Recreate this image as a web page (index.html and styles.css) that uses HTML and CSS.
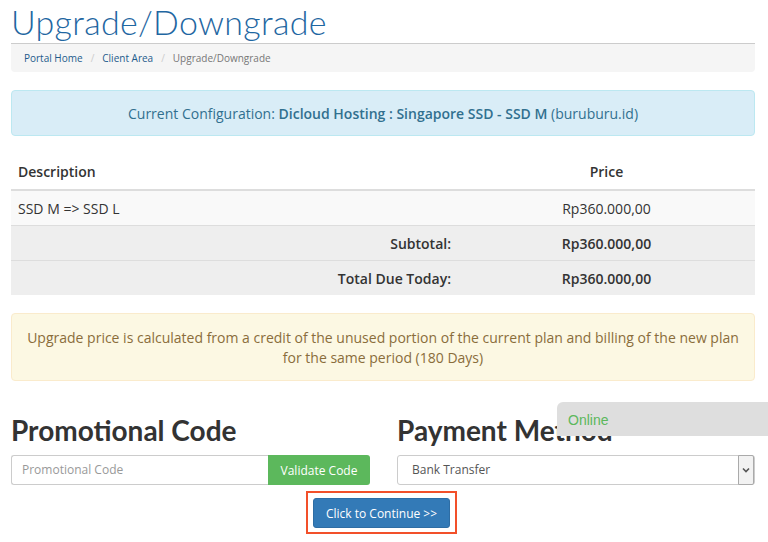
FILE: index.html
```html
<!DOCTYPE html>
<html>
<head>
<meta charset="utf-8">
<link rel="stylesheet" href="styles.css">
</head>
<body>
<div class="page">
  <h1 class="title">Upgrade/Downgrade</h1>
  <ol class="crumbs">
    <li><a href="#">Portal Home</a></li>
    <li class="sep">/</li>
    <li><a href="#">Client Area</a></li>
    <li class="sep">/</li>
    <li class="active">Upgrade/Downgrade</li>
  </ol>

  <div class="alert info">Current Configuration: <strong>Dicloud Hosting : Singapore SSD - SSD M</strong> (buruburu.id)</div>

  <table class="cart">
    <thead>
      <tr><th class="desc">Description</th><th class="price">Price</th></tr>
    </thead>
    <tbody>
      <tr class="odd"><td class="desc">SSD M =&gt; SSD L</td><td class="price">Rp360.000,00</td></tr>
      <tr class="sum"><td class="desc right">Subtotal:</td><td class="price">Rp360.000,00</td></tr>
      <tr class="sum"><td class="desc right">Total Due Today:</td><td class="price">Rp360.000,00</td></tr>
    </tbody>
  </table>

  <div class="alert warn">Upgrade price is calculated from a credit of the unused portion of the current plan and billing of the new plan for the same period (180 Days)</div>

  <div class="cols">
    <div class="col">
      <h2 class="sub">Promotional Code</h2>
      <div class="group">
        <div class="input placeholder">Promotional Code</div>
        <button class="btn green">Validate Code</button>
      </div>
    </div>
    <div class="col">
      <h2 class="sub">Payment Method</h2>
      <div class="select">
        <span class="sel-text">Bank Transfer</span>
        <span class="sel-arrow"><svg width="8" height="6" viewBox="0 0 8 6"><path d="M1 1.5 L4 4.5 L7 1.5" fill="none" stroke="#555" stroke-width="1.6"/></svg></span>
      </div>
    </div>
  </div>

  <div class="continue-row">
    <div class="highlight"><button class="btn blue">Click to Continue &gt;&gt;</button></div>
  </div>
</div>
<div class="online">Online</div>
</body>
</html>
```
FILE: styles.css
```css
html, body { margin: 0; padding: 0; background: #fff; }
body { font-family: "Open Sans", "Liberation Sans", sans-serif; color: #333; font-size: 14px; overflow: hidden; height: 542px; }
.page { width: 744px; margin-left: 11px; }
.title { font-family: "Lato", "Open Sans", sans-serif; font-weight: 300; font-size: 34px; color: #1f67a2; margin: 0; padding-top: 2px; line-height: 39px; height: 41px; border-bottom: 1px solid #ccc; letter-spacing: 0.3px; }
.crumbs { list-style: none; margin: 0 0 18px; padding: 0 13px; height: 28px; background: #f5f5f5; border-radius: 0 0 4px 4px; display: flex; align-items: center; font-size: 10px; }
.crumbs a { color: #1e5b8c; text-decoration: none; }
.crumbs .sep { color: #ccc; padding: 0 8px; }
.crumbs .active { color: #777; }
.alert { border: 1px solid; border-radius: 4px; text-align: center; }
.info { background: #d9edf7; border-color: #bce8f1; color: #31708f; font-size: 14px; height: 44px; line-height: 46px; }
.info strong { font-weight: 600; }
.cart { width: 100%; border-collapse: collapse; margin-top: 18px; font-size: 14px; }
.cart th { font-weight: 600; height: 35px; border-bottom: 2px solid #ddd; padding: 0 7px; vertical-align: middle; }
.cart th.desc { text-align: left; }
.cart td { height: 34px; border-top: 1px solid #ddd; padding: 0 7px; vertical-align: middle; }
.cart .desc { width: 433px; }
.cart .price { text-align: center; }
.cart .right { text-align: right; }
.cart tr.odd td { background: #f9f9f9; }
.cart tr.sum td { background: #eee; font-weight: 600; }
.warn { margin-top: 18px; background: #fcf8e3; border-color: #faebcc; color: #8a6d3b; font-size: 14px; line-height: 20px; padding: 14px 14px 12px; }
.cols { display: grid; grid-template-columns: 359px 358px; column-gap: 27px; margin-top: 33px; }
.sub { font-family: "Lato", "Open Sans", sans-serif; font-weight: 700; font-size: 28px; color: #333; margin: 0 0 9px; line-height: 32px; }
.group { display: flex; height: 30px; }
.input { flex: 1; border: 1px solid #ccc; border-right: none; border-radius: 3px 0 0 3px; font-size: 12px; line-height: 28px; padding-left: 10px; color: #999; }
.btn { font-family: "Open Sans", "Liberation Sans", sans-serif; border: none; color: #fff; cursor: pointer; }
.green { background: #5cb85c; border-radius: 0 3px 3px 0; width: 102px; font-size: 12px; padding: 0; }
.select { position: relative; height: 28px; border: 1px solid #ccc; border-radius: 3px; font-size: 12px; line-height: 28px; color: #555; }
.sel-text { padding-left: 14px; }
.sel-arrow { position: absolute; right: 0; top: -1px; width: 14px; height: 28px; background: #f2f2f2; border: 1px solid #aaa; border-radius: 0 2px 2px 0; display: flex; align-items: center; justify-content: center; }
.continue-row { display: flex; justify-content: center; margin-top: 6px; padding-right: 3px; }
.highlight { border: 2px solid #f2502a; padding: 5px 5px 4px 5px; }
.blue { background: #337ab7; border: 1px solid #2e6da4; border-radius: 3px; width: 137px; height: 30px; font-size: 12px; padding: 0; }
.online { position: absolute; left: 557px; top: 402px; width: 200px; height: 34px; padding-left: 11px; background: #dedede; border-radius: 6px 0 0 0; color: #5cb85c; font-family: "Liberation Sans", Arial, sans-serif; font-size: 14px; line-height: 36px; }
```
